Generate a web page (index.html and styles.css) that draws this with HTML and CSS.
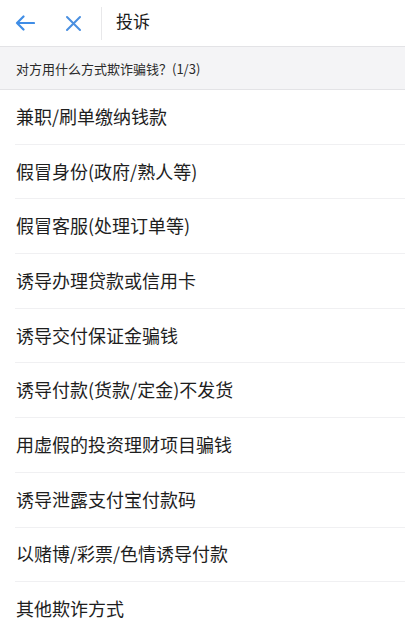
FILE: index.html
```html
<!DOCTYPE html>
<html lang="zh">
<head>
<meta charset="utf-8">
<link rel="stylesheet" href="styles.css">
</head>
<body>
<div class="page">
  <header class="topbar">
    <span class="icon back">
      <svg width="20" height="16" viewBox="0 0 20 16"><path d="M19 8H2M8.5 1.5L2 8l6.5 6.5" fill="none" stroke="#3f8de6" stroke-width="2.2" stroke-linecap="round" stroke-linejoin="round"/></svg>
    </span>
    <span class="icon close">
      <svg width="17" height="17" viewBox="0 0 17 17"><path d="M2 2l13 13M15 2L2 15" fill="none" stroke="#4a8fe0" stroke-width="2" stroke-linecap="round"/></svg>
    </span>
    <span class="vsep"></span>
    <span class="title">投诉</span>
  </header>
  <div class="question">对方用什么方式欺诈骗钱？(1/3)</div>
  <ul class="options">
    <li class="opt">兼职/刷单缴纳钱款</li>
    <li class="opt">假冒身份(政府/熟人等)</li>
    <li class="opt">假冒客服(处理订单等)</li>
    <li class="opt">诱导办理贷款或信用卡</li>
    <li class="opt">诱导交付保证金骗钱</li>
    <li class="opt">诱导付款(货款/定金)不发货</li>
    <li class="opt">用虚假的投资理财项目骗钱</li>
    <li class="opt">诱导泄露支付宝付款码</li>
    <li class="opt">以赌博/彩票/色情诱导付款</li>
    <li class="opt">其他欺诈方式</li>
  </ul>
</div>
</body>
</html>
```
FILE: styles.css
```css
html, body {
  margin: 0;
  padding: 0;
  background: #ffffff;
}
body {
  font-family: "Noto Sans CJK SC", "Noto Sans", sans-serif;
  color: #1f1f1f;
  overflow: hidden;
}
.page {
  width: 405px;
  height: 630px;
}
.topbar {
  height: 46px;
  display: flex;
  align-items: center;
  border-bottom: 1px solid #e3e3e6;
  box-sizing: content-box;
}
.icon {
  display: flex;
  align-items: center;
  justify-content: center;
}
.back {
  margin-left: 15px;
  width: 20px;
  margin-top: -1px;
}
.close {
  margin-left: 30px;
  width: 17px;
}
.vsep {
  width: 1px;
  height: 33px;
  background: #e8e8ea;
  margin-left: 19px;
  margin-top: 1px;
}
.title {
  margin-left: 14px;
  font-size: 17px;
  color: #1a1a1a;
  line-height: 1;
  margin-top: -5px;
}
.question {
  background: #f4f4f6;
  border-bottom: 1px solid #e3e3e6;
  display: flex;
  align-items: center;
  padding-left: 16px;
  font-size: 13px;
  color: #2a2a2a;
  padding-top: 1px;
  box-sizing: border-box;
  height: 43px;
}
.options {
  list-style: none;
  margin: 0;
  padding: 0 0 0 15px;
}
.opt {
  height: 54.7px;
  box-sizing: border-box;
  border-bottom: 1px solid #f0f0f2;
  display: flex;
  align-items: center;
  padding-left: 1px;
  font-size: 18px;
  color: #1e1e1e;
  padding-bottom: 2px;
}
```
